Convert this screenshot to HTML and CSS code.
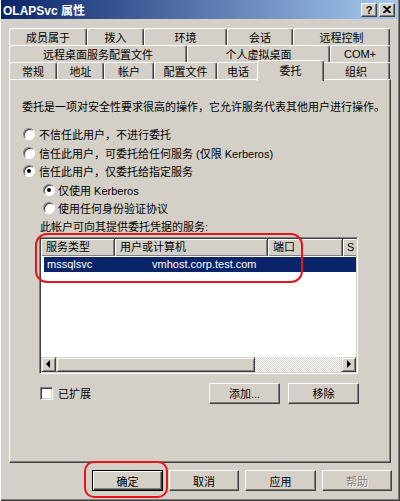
FILE: index.html
```html
<!DOCTYPE html>
<html lang="zh-CN">
<head>
<meta charset="utf-8">
<title>OLAPSvc 属性</title>
<link rel="stylesheet" href="styles.css">
</head>
<body>
<div class="window">
  <div class="titlebar">
    <span class="title">OLAPSvc 属性</span>
    <span class="tbtn help">?</span>
    <span class="tbtn close"><svg width="8" height="7" viewBox="0 0 8 7"><path d="M0 0h2l2 2 2-2h2v1L5 3.5 8 6v1H6L4 5 2 7H0V6l3-2.5L0 1z" fill="#000"/></svg></span>
  </div>

  <div class="tabs">
    <div class="tabrow">
      <div class="tab w78">成员属于</div>
      <div class="tab w57">拨入</div>
      <div class="tab w83">环境</div>
      <div class="tab w66">会话</div>
      <div class="tab grow">远程控制</div>
    </div>
    <div class="tabrow">
      <div class="tab w178">远程桌面服务配置文件</div>
      <div class="tab w143">个人虚拟桌面</div>
      <div class="tab grow">COM+</div>
    </div>
    <div class="tabrow">
      <div class="tab w48">常规</div>
      <div class="tab w47">地址</div>
      <div class="tab w50">帐户</div>
      <div class="tab w63">配置文件</div>
      <div class="tab w42">电话</div>
      <div class="tab w63 active">委托</div>
      <div class="tab grow">组织</div>
    </div>
  </div>

  <div class="panel">
    <div class="intro">委托是一项对安全性要求很高的操作，它允许服务代表其他用户进行操作。</div>
    <div class="options">
      <div class="radio"><span class="rb"></span><span>不信任此用户，不进行委托</span></div>
      <div class="radio"><span class="rb"></span><span>信任此用户，可委托给任何服务 (仅限 Kerberos)</span></div>
      <div class="radio"><span class="rb on"></span><span>信任此用户，仅委托给指定服务</span></div>
      <div class="radio sub"><span class="rb on"></span><span>仅使用 Kerberos</span></div>
      <div class="radio sub"><span class="rb"></span><span>使用任何身份验证协议</span></div>
    </div>
    <div class="listlabel">此帐户可向其提供委托凭据的服务:</div>
    <div class="listwrap">
      <div class="list">
        <div class="lhead">
          <div class="hcell h1">服务类型</div>
          <div class="hcell h2">用户或计算机</div>
          <div class="hcell h3">端口</div>
          <div class="hcell h4">S</div>
        </div>
        <div class="lbody">
          <div class="lrow"><span class="c1">mssqlsvc</span><span class="c2">vmhost.corp.test.com</span></div>
        </div>
        <div class="hscroll">
          <span class="sbtn"><span class="arrow left"></span></span>
          <span class="thumb"></span>
          <span class="track"></span>
          <span class="sbtn"><span class="arrow right"></span></span>
        </div>
      </div>
      <span class="mark mark-list"></span>
    </div>
    <div class="actions">
      <span class="cb"></span>
      <span class="cblabel">已扩展</span>
      <div class="btns">
        <span class="btn w71">添加...</span>
        <span class="btn w71">移除</span>
      </div>
    </div>
  </div>

  <div class="footer">
    <span class="btn ok w71">确定</span>
    <span class="btn w70">取消</span>
    <span class="btn w71">应用</span>
    <span class="btn w70 disabled">帮助</span>
  </div>
</div>
</body>
</html>
```

FILE: styles.css
```css
* { box-sizing: border-box; }
html, body { margin: 0; padding: 0; }
body {
  width: 400px;
  height: 501px;
  overflow: hidden;
  background: #d4d0c8;
  font: 11px "Liberation Sans", "Noto Sans CJK SC", sans-serif;
  color: #000;
}
.window {
  width: 400px;
  height: 501px;
  background: #d4d0c8;
  padding: 0 2px 2px 1px;
  box-shadow: inset 1px 0 #ffffff, inset -1px -1px #404040, inset -2px -2px #808080;
  display: flex;
  flex-direction: column;
}
.titlebar {
  height: 19px;
  flex: none;
  background: linear-gradient(to right, #0a246a, #a6caf0);
  display: flex;
  align-items: center;
  gap: 2px;
  padding: 0 3px 0 2px;
  color: #fff;
  font-weight: bold;
  font-size: 12px;
}
.title { flex: 1; white-space: nowrap; }
.tbtn {
  width: 16px;
  height: 14px;
  background: #d4d0c8;
  border: 1px solid;
  border-color: #fff #404040 #404040 #fff;
  box-shadow: inset -1px -1px #808080;
  display: flex;
  align-items: center;
  justify-content: center;
  color: #000;
  font: bold 11px "Liberation Sans", sans-serif;
}
.tabs { margin: 9px 0 0 8px; width: 381px; }
.tabrow { display: flex; height: 17px; }
.tab {
  height: 17px;
  flex: none;
  background: #d4d0c8;
  border-left: 1px solid #fff;
  border-top: 1px solid #fff;
  border-right: 1px solid #404040;
  box-shadow: inset -1px 0 #808080;
  border-radius: 3px 3px 0 0;
  display: flex;
  align-items: center;
  justify-content: center;
  white-space: nowrap;
}
.tab.grow { flex: 1; }
.w42 { width: 42px; } .w47 { width: 47px; } .w48 { width: 48px; }
.w50 { width: 50px; } .w57 { width: 57px; } .w63 { width: 63px; }
.w66 { width: 66px; } .w78 { width: 78px; } .w83 { width: 83px; }
.w143 { width: 143px; } .w178 { width: 178px; }
.w70 { width: 70px; } .w71 { width: 71px; }
.tab.active {
  position: relative;
  z-index: 1;
  width: 67px;
  height: 21px;
  margin: -2px -2px 0;
  padding-bottom: 2px;
  border-bottom: none;
}
.panel {
  margin-left: 8px;
  width: 382px;
  height: 384px;
  flex: none;
  border: 1px solid;
  border-color: #fff #404040 #404040 #fff;
  box-shadow: inset -1px -1px #808080;
  padding: 18px 0 0 12px;
}
.intro { height: 18px; line-height: 18px; white-space: nowrap; }
.options { margin-top: 9px; }
.radio {
  display: flex;
  align-items: center;
  height: 18.5px;
  gap: 4px;
  padding-left: 1px;
  white-space: nowrap;
}
.radio.sub { padding-left: 21px; gap: 3px; }
.rb {
  width: 12px;
  height: 12px;
  flex: none;
  border-radius: 50%;
  background: #fff;
  border: 1px solid;
  border-color: #808080 #ffffff #ffffff #808080;
  box-shadow: inset 1px 1px #404040;
  display: flex;
  align-items: center;
  justify-content: center;
}
.rb.on::after {
  content: "";
  width: 4px;
  height: 4px;
  border-radius: 50%;
  background: #000;
}
.listlabel { height: 18px; line-height: 18px; padding-left: 18px; white-space: nowrap; }
.listwrap { position: relative; margin: 1px 0 0 17px; width: 319px; }
.list {
  height: 137px;
  border: 1px solid;
  border-color: #808080 #fff #fff #808080;
  box-shadow: inset 1px 1px #404040, inset -1px -1px #d4d0c8;
  padding: 1px;
  display: flex;
  flex-direction: column;
  background: #fff;
}
.lhead { display: flex; height: 17px; overflow: hidden; flex: none; }
.hcell {
  flex: none;
  height: 17px;
  line-height: 16px;
  padding-left: 5px;
  background: #d4d0c8;
  border-right: 1px solid #404040;
  box-shadow: inset 1px 1px #fff, inset -1px -1px #808080;
  white-space: nowrap;
  overflow: hidden;
}
.h1 { width: 74px; }
.h2 { width: 153px; }
.h3 { width: 75px; }
.h4 { width: 40px; padding-left: 4px; }
.lbody { flex: 1; background: #fff; padding-top: 1px; }
.lrow {
  margin-left: 3px;
  height: 15px;
  background: #0a246a;
  color: #fff;
  display: flex;
  align-items: center;
  white-space: nowrap;
}
.c1 { width: 108px; padding-left: 3px; }
.hscroll { display: flex; height: 15px; flex: none; }
.sbtn, .thumb {
  background: #d4d0c8;
  border: 1px solid;
  border-color: #d4d0c8 #404040 #404040 #d4d0c8;
  box-shadow: inset 1px 1px #fff, inset -1px -1px #808080;
}
.sbtn {
  width: 15px;
  flex: none;
  display: flex;
  align-items: center;
  justify-content: center;
}
.thumb { width: 199px; flex: none; }
.track {
  flex: 1;
  background: repeating-conic-gradient(#ffffff 0 25%, #d4d0c8 0 50%) 0 0 / 2px 2px;
}
.arrow { width: 0; height: 0; border-top: 4px solid transparent; border-bottom: 4px solid transparent; }
.arrow.left { border-right: 4px solid #000; margin-left: -1px; }
.arrow.right { border-left: 4px solid #000; margin-left: 1px; }
.mark {
  position: absolute;
  border: 2px solid #e8141c;
  pointer-events: none;
}
.mark-list { left: -4px; top: -4px; width: 268px; height: 50px; border-radius: 12px; }
.actions {
  display: flex;
  align-items: center;
  margin: 9px 0 0 17px;
  width: 320px;
  height: 21px;
}
.cb {
  width: 13px;
  height: 13px;
  margin-left: 1px;
  background: #fff;
  border: 1px solid;
  border-color: #808080 #fff #fff #808080;
  box-shadow: inset 1px 1px #404040, inset -1px -1px #d4d0c8;
}
.cblabel { margin-left: 5px; }
.btns { margin-left: auto; display: flex; gap: 8px; }
.btn {
  height: 21px;
  flex: none;
  background: #d4d0c8;
  border: 1px solid;
  border-color: #fff #404040 #404040 #fff;
  box-shadow: inset -1px -1px #808080;
  display: flex;
  align-items: center;
  justify-content: center;
  white-space: nowrap;
}
.btn.disabled { color: #808080; text-shadow: 1px 1px #fff; }
.footer {
  display: flex;
  justify-content: flex-end;
  gap: 6px;
  margin-top: 7px;
  padding-right: 6px;
}
.btn.ok {
  position: relative;
  border: 1px solid #000;
  box-shadow: inset 1px 1px #fff, inset -1px -1px #404040, inset -2px -2px #808080;
}
.btn.ok::after {
  content: "";
  position: absolute;
  left: -9px;
  top: -10px;
  right: -6px;
  bottom: -8px;
  border: 2px solid #e8141c;
  border-radius: 10px;
}
```
